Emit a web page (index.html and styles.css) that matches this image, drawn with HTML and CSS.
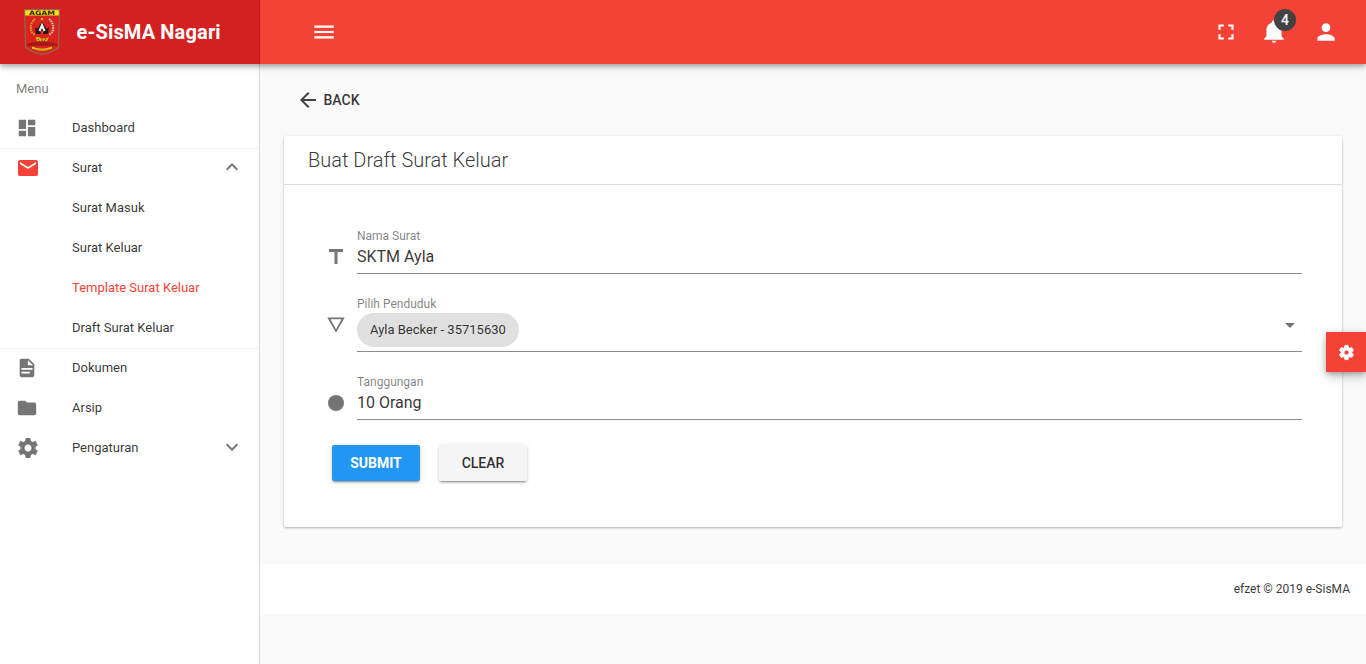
FILE: index.html
```html
<!DOCTYPE html>
<html lang="id">
<head>
<meta charset="utf-8">
<title>e-SisMA Nagari</title>
<link rel="stylesheet" href="styles.css">
</head>
<body>
<div class="app">
  <header class="topbar">
    <div class="brand">
      <svg class="crest" viewBox="0 0 36 46">
        <path d="M.6 .6H35.4L34.6 38.5Q27 44 18 45.3Q9 44 1.6 38.5Z" fill="#d9231c" stroke="#8a6b55" stroke-width="1.2"/>
        <path d="M1.2 1.2H34.8V6.6H1.2Z" fill="#f5e614"/>
        <text x="18" y="6" text-anchor="middle" textLength="26" lengthAdjust="spacingAndGlyphs" class="crest-text">AGAM</text>
        <path d="M11 10Q5 15 7.500 23L11 26" fill="none" stroke="#d5a02a" stroke-width="2" stroke-dasharray="1.6 .8"/>
        <path d="M25 10Q31 15 28.500 23L25 26" fill="none" stroke="#d8c4b8" stroke-width="2" stroke-dasharray="1.6 .8"/>
        <circle cx="18" cy="10" r="1.300" fill="#e8b71c"/>
        <path d="M11 18L13.500 20L16 15.500L18 13L20 15.500L22.500 20L25 18L24 25H12Z" fill="#251a1a"/>
        <path d="M14.500 21.500L18 13.500L21.500 21.500L19.500 22.500L18 19L16.500 22.500Z" fill="#eee"/>
        <path d="M16.800 22H19.200V25H16.800Z" fill="#e33"/>
        <path d="M11.500 28H15L17 29.500H22L25 28L23 32H13Z" fill="#d5b51b"/>
        <path d="M14 29.500L15 31.500M18 30V32M22 30L20 32" stroke="#493016" stroke-width=".8"/>
        <path d="M3 35L9 33H27L33 35V37H3Z" fill="#a51a16"/>
        <path d="M8 37.500Q18 42 28 37.500V39.500Q18 44 8 39.500Z" fill="#f0d51a"/>
        <path d="M11 39.800Q18 42.400 25 39.800" fill="none" stroke="#604812" stroke-width=".7" stroke-dasharray="1 .6"/>
      </svg>
      <span class="brand-name">e-SisMA Nagari</span>
    </div>
    <div class="tools">
      <svg class="i26" viewBox="0 0 24 24"><path d="M3 6h18v2H3zM3 11h18v2H3zM3 16h18v2H3z"/></svg>
      <span class="grow"></span>
      <svg class="i26" viewBox="0 0 24 24"><path d="M5 5h5v2H7v3H5V5m9 0h5v5h-2V7h-3V5m3 9h2v5h-5v-2h3v-3m-7 3v2H5v-5h2v3h3z"/></svg>
      <span class="bell">
        <svg class="i26" viewBox="0 0 24 24"><path d="M21 19v1H3v-1l2-2v-6c0-3.100 2.030-5.830 5-6.710V4a2 2 0 0 1 4 0v.29c2.970.88 5 3.610 5 6.710v6l2 2m-7 2a2 2 0 0 1-4 0"/></svg>
        <span class="badge">4</span>
      </span>
      <svg class="i26" viewBox="0 0 24 24"><path d="M12 12c2.210 0 4-1.790 4-4s-1.790-4-4-4-4 1.790-4 4 1.790 4 4 4zm0 2c-2.670 0-8 1.340-8 4v2h16v-2c0-2.660-5.330-4-8-4z"/></svg>
    </div>
  </header>

  <div class="columns">
    <nav class="sidebar">
      <div class="subheader">Menu</div>
      <a class="item"><span class="lead"><svg class="i22" viewBox="0 0 24 24"><path d="M13 3v6h8V3m-8 18h8V11h-8M3 21h8v-6H3m0-2h8V3H3v10z"/></svg></span><span class="name">Dashboard</span></a>
      <div class="group">
        <a class="item"><span class="lead active"><svg class="i24" viewBox="0 0 24 24"><path d="M20 4H4c-1.100 0-1.990.9-1.990 2L2 18c0 1.100.9 2 2 2h16c1.100 0 2-.9 2-2V6c0-1.100-.9-2-2-2zm0 4l-8 5-8-5V6l8 5 8-5v2z"/></svg></span><span class="name">Surat</span><svg class="i24 chevron" viewBox="0 0 24 24"><path d="M7.410 15.410L12 10.830l4.590 4.580L18 14l-6-6-6 6z"/></svg></a>
        <a class="item sub"><span class="name">Surat Masuk</span></a>
        <a class="item sub"><span class="name">Surat Keluar</span></a>
        <a class="item sub active"><span class="name">Template Surat Keluar</span></a>
        <a class="item sub"><span class="name">Draft Surat Keluar</span></a>
      </div>
      <a class="item"><span class="lead"><svg class="i22" viewBox="0 0 24 24"><path d="M13 9h5.500L13 3.500V9M6 2h8l6 6v12a2 2 0 0 1-2 2H6a2 2 0 0 1-2-2V4c0-1.110.89-2 2-2m9 16v-2H6v2h9m3-4v-2H6v2h12z"/></svg></span><span class="name">Dokumen</span></a>
      <a class="item"><span class="lead"><svg class="i22" viewBox="0 0 24 24"><path d="M10 4H4c-1.110 0-2 .89-2 2v12a2 2 0 0 0 2 2h16a2 2 0 0 0 2-2V8c0-1.110-.9-2-2-2h-8l-2-2z"/></svg></span><span class="name">Arsip</span></a>
      <a class="item"><span class="lead"><svg class="i24" viewBox="0 0 24 24"><path d="M19.430 12.980c.04-.32.07-.64.07-.98s-.03-.66-.07-.98l2.110-1.650c.19-.15.24-.42.12-.64l-2-3.460c-.12-.22-.39-.3-.61-.22l-2.490 1c-.52-.4-1.080-.73-1.690-.98l-.38-2.650C14.460 2.180 14.250 2 14 2h-4c-.25 0-.46.18-.49.42l-.38 2.650c-.61.25-1.170.59-1.690.98l-2.490-1c-.23-.09-.49 0-.61.22l-2 3.460c-.13.22-.07.49.12.64l2.110 1.650c-.04.32-.07.65-.07.98s.03.66.07.98l-2.110 1.650c-.19.15-.24.42-.12.64l2 3.460c.12.22.39.3.61.22l2.490-1c.52.4 1.080.73 1.690.98l.38 2.650c.03.24.24.42.49.42h4c.25 0 .46-.18.49-.42l.38-2.650c.61-.25 1.170-.59 1.690-.98l2.490 1c.23.09.49 0 .61-.22l2-3.460c.12-.22.07-.49-.12-.64l-2.110-1.650zM12 15.500c-1.930 0-3.500-1.570-3.500-3.500s1.570-3.500 3.500-3.500 3.500 1.570 3.500 3.500-1.570 3.500-3.500 3.500z"/></svg></span><span class="name">Pengaturan</span><svg class="i24 chevron down" viewBox="0 0 24 24"><path d="M7.410 8.590L12 13.170l4.590-4.580L18 10l-6 6-6-6z"/></svg></a>
    </nav>

    <main class="content">
      <a class="back"><svg class="i24" viewBox="0 0 24 24"><path d="M20 11H7.830l5.590-5.590L12 4l-8 8 8 8 1.410-1.410L7.830 13H20v-2z"/></svg>BACK</a>
      <section class="card">
        <h1 class="card-title">Buat Draft Surat Keluar</h1>
        <form class="form">
          <div class="field">
            <svg class="i24" viewBox="0 0 24 24"><path d="M5 4v3h5.500v12h3V7H19V4z"/></svg>
            <div class="control"><label class="label">Nama Surat</label><div class="value">SKTM Ayla</div></div>
          </div>
          <div class="field">
            <svg class="i24" viewBox="0 0 24 24"><path d="M3.300 4.500h17.400L12 19.800zM6.500 6.300L12 16.300l5.500-10z" fill-rule="evenodd"/></svg>
            <div class="control select">
              <label class="label">Pilih Penduduk</label><span class="chip">Ayla Becker - 35715630</span>
              <svg class="i24 caret" viewBox="0 0 24 24"><path d="M7 10l5 5 5-5z"/></svg>
            </div>
          </div>
          <div class="field">
            <svg class="i24" viewBox="0 0 24 24"><circle cx="12" cy="12" r="8"/></svg>
            <div class="control"><label class="label">Tanggungan</label><div class="value">10 Orang</div></div>
          </div>
          <div class="actions">
            <button type="button" class="btn primary">SUBMIT</button>
            <button type="button" class="btn">CLEAR</button>
          </div>
        </form>
      </section>
      <footer class="footer">efzet © 2019 e-SisMA</footer>
    </main>
  </div>
  <button type="button" class="settings"><svg viewBox="0 0 24 24"><path d="M19.430 12.980c.04-.32.07-.64.07-.98s-.03-.66-.07-.98l2.110-1.650c.19-.15.24-.42.12-.64l-2-3.460c-.12-.22-.39-.3-.61-.22l-2.490 1c-.52-.4-1.080-.73-1.690-.98l-.38-2.650C14.460 2.180 14.250 2 14 2h-4c-.25 0-.46.18-.49.42l-.38 2.650c-.61.25-1.170.59-1.690.98l-2.490-1c-.23-.09-.49 0-.61.22l-2 3.460c-.13.22-.07.49.12.64l2.110 1.650c-.04.32-.07.65-.07.98s.03.66.07.98l-2.110 1.650c-.19.15-.24.42-.12.64l2 3.460c.12.22.39.3.61.22l2.490-1c.52.4 1.080.73 1.690.98l.38 2.650c.03.24.24.42.49.42h4c.25 0 .46-.18.49-.42l.38-2.650c.61-.25 1.170-.59 1.690-.98l2.490 1c.23.09.49 0 .61-.22l2-3.460c.12-.22.07-.49-.12-.64l-2.110-1.650zM12 15.500c-1.930 0-3.500-1.570-3.500-3.500s1.570-3.500 3.500-3.500 3.500 1.570 3.500 3.500-1.570 3.500-3.500 3.500z"/></svg></button>
</div>
</body>
</html>
```
FILE: styles.css
```css
* { box-sizing: border-box; }
body { margin: 0; font-family: Roboto, sans-serif; color: rgba(0,0,0,.8); background: #fafafa; }
svg { display: block; flex: none; fill: currentColor; }
.i22 { width: 22px; height: 22px; }
.i24 { width: 24px; height: 24px; }
.i26 { width: 26px; height: 26px; }
.grow { flex: 1; }

.app { position: relative; height: 664px; overflow: hidden; display: flex; flex-direction: column; }

.topbar { position: relative; z-index: 2; flex: none; display: flex; height: 64px; background: #f44336; color: #fff;
  box-shadow: 0 2px 4px -1px rgba(0,0,0,.2), 0 4px 5px rgba(0,0,0,.14), 0 1px 10px rgba(0,0,0,.12); }
.brand { display: flex; align-items: center; width: 260px; padding-left: 24px; background: #d32020; border-right: 1px solid #b71c1c; }
.crest { width: 36px; height: 46px; }
.crest-text { font: 700 6px "DejaVu Sans", sans-serif; fill: #2b2510; }
.brand-name { margin-left: 16.500px; font-size: 20px; font-weight: 700; line-height: 64px; letter-spacing: .15px; }
.tools { flex: 1; display: flex; align-items: center; padding: 0 27px 0 51px; }
.bell { position: relative; margin: -2px 26px 0 22px; }
.badge { position: absolute; top: -9px; right: -9px; width: 22px; height: 22px; border-radius: 50%; background: #424242;
  font-size: 14px; font-weight: 500; line-height: 22px; text-align: center; }

.columns { flex: 1; display: flex; }
.sidebar { width: 260px; background: #fff; border-right: 1px solid #dcdcdc; font-size: 13px; }
.subheader { height: 44px; padding: 1px 16px 0; line-height: 48px; color: rgba(0,0,0,.54); }
.item { display: flex; align-items: center; height: 40px; padding: 0 15px 0 16px; color: rgba(0,0,0,.8); }
.name { padding-bottom: 2px; }
.item.sub { padding-left: 72px; }
.item.active, .lead.active { color: #f44336; }
.lead { width: 56px; color: rgba(0,0,0,.54); }
.chevron { margin: -2px 0 0 auto; color: rgba(0,0,0,.54); }
.group { box-shadow: inset 0 1px #f0f0f0, 0 1px #f0f0f0; }

.content { flex: 1; display: flex; flex-direction: column; }
.back { display: flex; align-items: center; gap: 3.500px; height: 36px; margin: 18px 24px 0; padding-left: 12px; font-size: 14px; font-weight: 500; }
.back svg { fill: #424242; }
.card { height: 391px; margin: 18px 24px 0; background: #fff; border-radius: 2px;
  box-shadow: 0 1px 3px rgba(0,0,0,.18), 0 1px 2px rgba(0,0,0,.14); }
.card-title { margin: 0; height: 49px; padding-left: 24px; border-bottom: 1px solid #ddd; font-size: 20px; font-weight: 300; line-height: 48px; }
.form { padding: 43px 40px 0; }
.field { display: flex; align-items: flex-start; gap: 9px; margin-bottom: 22px; }
.field > svg { margin-top: 17px; color: rgba(0,0,0,.54); }
.control { flex: 1; height: 46px; border-bottom: 1px solid #8c8c8c; }
.label { display: block; height: 16px; font-size: 12px; line-height: 16px; color: rgba(0,0,0,.5); }
.value { font-size: 16px; line-height: 26px; }
.select { position: relative; height: 56px; }
.chip { display: inline-block; height: 34px; margin-top: 1px; padding: 0 13px; border-radius: 17px; background: #e0e0e0; font-size: 13px; line-height: 34px; }
.caret { position: absolute; right: 0; top: 17px; color: rgba(0,0,0,.54); }
.actions { display: flex; gap: 19px; padding: 3px 0 0 8px; }
.btn { width: 88px; height: 36px; padding: 0; border: 0; border-radius: 2px; background: #f5f5f5; color: rgba(0,0,0,.82); font: 500 14px Roboto, sans-serif;
  box-shadow: 0 3px 1px -2px rgba(0,0,0,.2), 0 2px 2px rgba(0,0,0,.14), 0 1px 5px rgba(0,0,0,.12); }
.primary { background: #2196f3; color: #fff; font-weight: 700; }
.footer { height: 50px; margin-top: 37px; padding-right: 16px; background: #fff; font-size: 12px; line-height: 50px; text-align: right; }

.settings { position: absolute; right: 0; top: 332px; width: 40px; height: 40px; padding: 0; border: 0; display: grid; place-items: center; background: #f44336; color: #fff;
  box-shadow: 0 3px 5px -1px rgba(0,0,0,.2), 0 6px 10px rgba(0,0,0,.14), 0 1px 8px rgba(0,0,0,.12); }
.settings svg { width: 17px; height: 17px; stroke: currentColor; stroke-width: 1.2; }
```
